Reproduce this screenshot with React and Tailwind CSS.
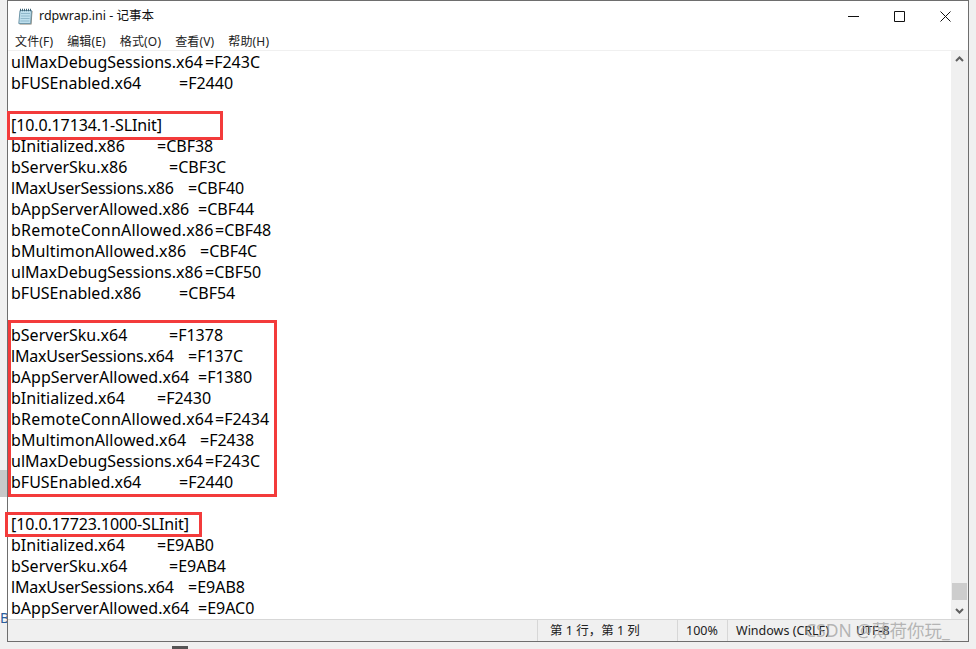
import React from "react";

// column width puts the "=" where the reference has it, tracking evens out the font difference
const cols = {
  ulMaxDebugSessions: "w-[194px]",
  bFUSEnabled: "w-[168px]",
  bInitialized: "w-[146px]",
  bServerSku: "w-[158px]",
  lMaxUserSessions: "w-[177px] tracking-[-0.2px]",
  bAppServerAllowed: "w-[187px]",
  bRemoteConnAllowed: "w-[204px] tracking-[0.2px]",
  bMultimonAllowed: "w-[189px] tracking-[0.1px]",
};

const lines = [
  "ulMaxDebugSessions.x64=F243C",
  "bFUSEnabled.x64=F2440",
  "",
  "[10.0.17134.1-SLInit]",
  "bInitialized.x86=CBF38",
  "bServerSku.x86=CBF3C",
  "lMaxUserSessions.x86=CBF40",
  "bAppServerAllowed.x86=CBF44",
  "bRemoteConnAllowed.x86=CBF48",
  "bMultimonAllowed.x86=CBF4C",
  "ulMaxDebugSessions.x86=CBF50",
  "bFUSEnabled.x86=CBF54",
  "",
  "bServerSku.x64=F1378",
  "lMaxUserSessions.x64=F137C",
  "bAppServerAllowed.x64=F1380",
  "bInitialized.x64=F2430",
  "bRemoteConnAllowed.x64=F2434",
  "bMultimonAllowed.x64=F2438",
  "ulMaxDebugSessions.x64=F243C",
  "bFUSEnabled.x64=F2440",
  "",
  "[10.0.17723.1000-SLInit]",
  "bInitialized.x64=E9AB0",
  "bServerSku.x64=E9AB4",
  "lMaxUserSessions.x64=E9AB8",
  "bAppServerAllowed.x64=E9AC0",
];

const menus = ["文件(F)", "编辑(E)", "格式(O)", "查看(V)", "帮助(H)"];

const cjk = "font-['Microsoft_YaHei','Noto_Sans','Noto_Sans_CJK_SC',sans-serif]";

function Line({ text }) {
  if (!text) return <div className="h-[21px]" />;
  if (text.startsWith("[")) return <div className="h-[21px] tracking-[-0.12px]">{text}</div>;
  const [name, value] = text.split("=");
  return (
    <div className="flex h-[21px]">
      <span className={`shrink-0 ${cols[name.split(".")[0]]}`}>{name}</span>
      <span>={value}</span>
    </div>
  );
}

function NotepadIcon() {
  return (
    <svg width="17" height="17" viewBox="0 0 17 17" className="shrink-0">
      <path d="M3.5 3h12l-1 13.5h-12z" fill="#8a8172" />
      <path d="M3 2.5h11.5l-.8 13H1.8z" fill="#bfe0ee" stroke="#6f96a8" />
      <path d="M4 5.5h9M3.8 8h9M3.6 10.5h9M3.4 13h9" stroke="#8fb8cb" />
      <path d="M3 2h11.5" stroke="#3f6477" strokeWidth="2.4" strokeDasharray="1 1" />
    </svg>
  );
}

export default function App() {
  return (
    <div className={`relative h-[649px] w-[976px] overflow-hidden bg-[#f0f0f0] ${cjk}`}>
      {/* bits of the desktop behind the window */}
      <div className="absolute left-0 top-[470px] h-[27px] w-[7px] bg-[#c8c8c8]" />
      <div className="absolute left-0 top-[497px] h-[123px] w-[7px] bg-white" />
      <div className="absolute left-0 top-[608px] text-[14px] leading-[20px] text-[#2a5d9c]">B</div>
      <div className="absolute left-[172px] top-[646px] h-[3px] w-[16px] bg-[#555]" />

      <div className="relative ml-[7px] flex h-[642px] w-[962px] flex-col border border-[#6e6e6e] bg-white">
        <div className="flex h-[29px] shrink-0 items-center pl-[9px] pt-[2px]">
          <NotepadIcon />
          <span className="ml-[5px] text-[12.5px] text-[#111]">rdpwrap.ini - 记事本</span>
          <div className="ml-auto flex items-center gap-[35px] pr-[17px]">
            <svg width="11" height="11" viewBox="0 0 11 11"><path d="M0 5.5h11" stroke="#111" /></svg>
            <svg width="11" height="11" viewBox="0 0 11 11"><path d="M.5.5h10v10H.5z" fill="none" stroke="#111" /></svg>
            <svg width="11" height="11" viewBox="0 0 11 11"><path d="M.5.5l10 10M10.5.5l-10 10" stroke="#111" /></svg>
          </div>
        </div>
        <div className="flex h-[20px] shrink-0 items-center gap-[14px] pl-[7px] pt-[3px] text-[12px] tracking-[0.15px] text-[#222]">
          {menus.map((m) => (
            <span key={m}>{m}</span>
          ))}
        </div>
        <div className="flex min-h-0 flex-1 border-t border-[#f0f0f0]">
          <div className="min-w-0 flex-1 overflow-hidden whitespace-pre pl-[3px] pt-[1px] text-[16px] leading-[21px] text-black">
            {lines.map((l, i) => (
              <Line key={i} text={l} />
            ))}
          </div>
          <div className="flex w-[17px] shrink-0 flex-col items-center justify-between bg-[#f0f0f0] py-[5px]">
            <svg width="9" height="6" viewBox="0 0 9 6"><path d="M1 5l3.5-3.5L8 5" fill="none" stroke="#606060" strokeWidth="2" /></svg>
            <div className="mt-auto mb-[8px] h-[17px] w-[15px] bg-[#cdcdcd]" />
            <svg width="9" height="6" viewBox="0 0 9 6"><path d="M1 1l3.5 3.5L8 1" fill="none" stroke="#606060" strokeWidth="2" /></svg>
          </div>
        </div>
        <div className="flex h-[22px] shrink-0 items-center border-t border-[#d7d7d7] bg-[#f0f0f0] text-[12.5px] text-[#222]">
          <div className="w-[529px]" />
          <div className="flex h-full w-[140px] items-center border-l border-[#d7d7d7] pl-[12px] pt-[1px]">第 1 行，第 1 列</div>
          <div className="flex h-full w-[50px] items-center border-l border-[#d7d7d7] pl-[8px] pt-[1px]">100%</div>
          <div className="flex h-full w-[120px] items-center border-l border-[#d7d7d7] pl-[8px] pt-[1px]">Windows (CRLF)</div>
          <div className="flex h-full items-center pl-[9px] pt-[1px]">UTF-8</div>
        </div>
      </div>

      {/* red annotation boxes */}
      <div className="absolute left-[7px] top-[111px] h-[29px] w-[216px] border-[3px] border-[#f33b3b]" />
      <div className="absolute left-[8px] top-[320px] h-[177px] w-[269px] border-[3px] border-[#f33b3b]" />
      <div className="absolute left-[5px] top-[512px] h-[25px] w-[197px] border-[3px] border-[#f33b3b]" />

      <div className="pointer-events-none absolute left-[805px] top-[617px] text-[17.5px] leading-[26px] text-[#9a9a9a]/70">
        CSDN @薄荷你玩_
      </div>
    </div>
  );
}
